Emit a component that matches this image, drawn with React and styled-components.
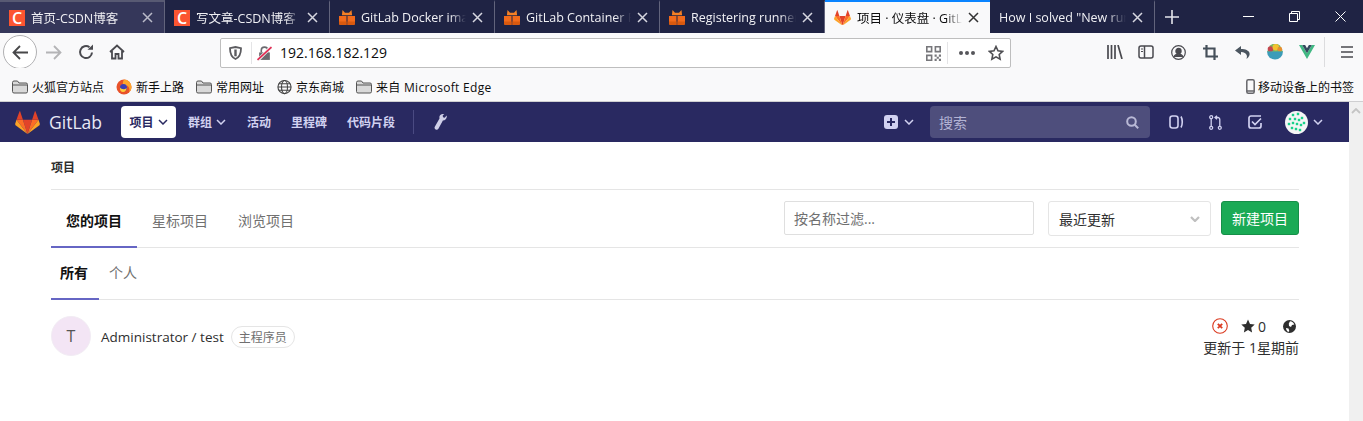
import styled, { createGlobalStyle } from 'styled-components';

const FONT = `"Open Sans", "Noto Sans", "Noto Sans CJK SC", sans-serif`;

const GlobalStyle = createGlobalStyle`
  html, body {
    margin: 0;
    padding: 0;
    background: #fff;
    overflow: hidden;
  }
  * {
    box-sizing: border-box;
  }
`;

const tabs = [
  { id: 1, title: '首页-CSDN博客', icon: 'csdn', hover: true },
  { id: 2, title: '写文章-CSDN博客', icon: 'csdn' },
  { id: 3, title: 'GitLab Docker images', icon: 'box' },
  { id: 4, title: 'GitLab Container Registry', icon: 'box' },
  { id: 5, title: 'Registering runners', icon: 'box' },
  { id: 6, title: '项目 · 仪表盘 · GitLab', icon: 'fox', active: true },
  { id: 7, title: 'How I solved "New runner', icon: null },
];

function Fox({ size = 24 }) {
  return (
    <svg width={size} height={size * 0.92} viewBox="0 0 24 22">
      <polygon points="12,22 16.4,8.4 7.6,8.4" fill="#e24329" />
      <polygon points="12,22 7.6,8.4 1.4,8.4" fill="#fc6d26" />
      <polygon points="1.4,8.4 0.1,12.4 0.5,13.7 12,22" fill="#fca326" />
      <polygon points="1.4,8.4 7.6,8.4 4.9,0.2 4.4,0.2" fill="#e24329" />
      <polygon points="12,22 16.4,8.4 22.6,8.4" fill="#fc6d26" />
      <polygon points="22.6,8.4 23.9,12.4 23.5,13.7 12,22" fill="#fca326" />
      <polygon points="22.6,8.4 16.4,8.4 19.1,0.2 19.6,0.2" fill="#e24329" />
    </svg>
  );
}

function BoxIcon() {
  return (
    <svg width="16" height="15" viewBox="0 0 16 15">
      <path d="M3.500 0L6 2.800h4L12.500 0l.6 5.200H2.900z" fill="#f58025" />
      <path d="M0 6h7.500v9H1l-1-1zM8.500 6H16v8l-1 1H8.500z" fill="#f26a1b" />
      <path d="M0 11.500h7.500V15H1l-1-1zM8.500 11.500H16V14l-1 1H8.500z" fill="#d9590f" />
    </svg>
  );
}

function CloseIcon() {
  return (
    <svg width="11" height="11" viewBox="0 0 11 11" stroke="currentColor" strokeWidth="1.500">
      <path d="M1 1l9 9M10 1l-9 9" />
    </svg>
  );
}

function Tab({ tab }) {
  return (
    <TabItem $active={tab.active} $hover={tab.hover}>
      {tab.icon === 'csdn' && <CsdnMark>C</CsdnMark>}
      {tab.icon === 'box' && <BoxIcon />}
      {tab.icon === 'fox' && <Fox size={17} />}
      <TabTitle>{tab.title}</TabTitle>
      <TabClose $active={tab.active} $hover={tab.hover}>
        <CloseIcon />
      </TabClose>
    </TabItem>
  );
}

function FolderIcon() {
  return (
    <svg width="16" height="14" viewBox="0 0 16 14">
      <path d="M.5 2.500A1.500 1.500 0 0 1 2 1h3.500l1.500 2h7a1.500 1.500 0 0 1 1.500 1.500v7A1.500 1.500 0 0 1 14 13H2a1.500 1.500 0 0 1-1.500-1.500z" fill="#d9d9d9" stroke="#555" />
      <path d="M1 5h14" stroke="#555" />
    </svg>
  );
}

function FirefoxIcon() {
  return (
    <svg width="16" height="16" viewBox="0 0 16 16">
      <circle cx="8" cy="8" r="7.500" fill="#e8522a" />
      <path d="M8 .5A7.500 7.500 0 0 1 15.500 8c0 2-1 4-2.500 5.300 1-2.300.3-5.300-2-6.800.4 1.300-.2 2.300-1 2.800-.5-1.300-2-1.800-3-3.300C6.600 4.500 7 2 8 .5z" fill="#ffa62b" />
      <circle cx="7.500" cy="8.500" r="3.500" fill="#3d3fb4" />
      <path d="M4 8.500c1 1.500 3 2 5 1.500 1-.3 1.500-1 1.600-1.500C10.800 11 9 13 7 13c-2 0-3.500-2-3-4.500z" fill="#ffcb3b" />
    </svg>
  );
}

function GlobeIcon() {
  return (
    <svg width="15" height="16" viewBox="0 0 16 16" fill="none" stroke="#444" strokeWidth="1.200">
      <circle cx="8" cy="8" r="7" />
      <ellipse cx="8" cy="8" rx="3.200" ry="7" />
      <path d="M1 8h14M2 4.500h12M2 11.500h12" />
    </svg>
  );
}

function Chevron({ color = 'currentColor', width = 1.5 }) {
  return (
    <svg width="10" height="6" viewBox="0 0 10 6" fill="none" stroke={color} strokeWidth={width}>
      <path d="M1 1l4 4 4-4" />
    </svg>
  );
}

function Identicon() {
  const dots = [
    [8, 4], [13, 3], [17, 7], [5, 8], [10, 8], [14, 9], [19, 12],
    [4, 13], [8, 12], [12, 13], [16, 14], [7, 17], [11, 18], [15, 19],
  ];
  return (
    <svg width="23" height="23" viewBox="0 0 23 23">
      <circle cx="11.500" cy="11.500" r="11.500" fill="#f6f6f6" />
      {dots.map(([x, y]) => (
        <rect key={`${x}-${y}`} x={x - 1.200} y={y - 1.200} width="2.400" height="2.400" fill="#19d18b" />
      ))}
    </svg>
  );
}

export default function App() {
  return (
    <Page>
      <GlobalStyle />
      <TabStrip>
        {tabs.map((tab) => (
          <Tab key={tab.id} tab={tab} />
        ))}
        <NewTab>
          <svg width="14" height="14" viewBox="0 0 14 14" stroke="#e4e5ec" strokeWidth="1.600">
            <path d="M7 0v14M0 7h14" />
          </svg>
        </NewTab>
        <WindowControls>
          <WindowButton>
            <svg width="11" height="11" viewBox="0 0 11 11" stroke="#fff"><path d="M0 5.500h11" /></svg>
          </WindowButton>
          <WindowButton>
            <svg width="11" height="11" viewBox="0 0 11 11" stroke="#fff" fill="none">
              <path d="M.5 2.500h8v8h-8zM2.500 2.500v-2h8v8h-2" />
            </svg>
          </WindowButton>
          <WindowButton>
            <svg width="11" height="11" viewBox="0 0 11 11" stroke="#fff"><path d="M.5.5l10 10M10.500.5l-10 10" /></svg>
          </WindowButton>
        </WindowControls>
      </TabStrip>

      <Toolbar>
        <BackButton>
          <svg width="17" height="15" viewBox="0 0 17 15" fill="none" stroke="#474749" strokeWidth="1.800">
            <path d="M16 7.500H2M8 1L1.500 7.500 8 14" />
          </svg>
        </BackButton>
        <ToolButton $w={32}>
          <svg width="17" height="15" viewBox="0 0 17 15" fill="none" stroke="#b4b4b6" strokeWidth="1.800">
            <path d="M1 7.500h14M9 1l6.500 6.500L9 14" />
          </svg>
        </ToolButton>
        <ToolButton $w={33}>
          <svg width="16" height="16" viewBox="0 0 16 16" fill="none" stroke="#4a4a4f" strokeWidth="2">
            <path d="M14 8.500A6 6 0 1 1 11.500 3.200" />
            <path d="M9.500 5.800h5.500V.5z" fill="#4a4a4f" stroke="none" />
          </svg>
        </ToolButton>
        <ToolButton $w={30}>
          <svg width="16" height="16" viewBox="0 0 16 16" fill="none" stroke="#4a4a4f" strokeWidth="1.800">
            <path d="M1 8l7-6.500L15 8M3 7v7.500h3.500V10h3v4.500H13V7" />
          </svg>
        </ToolButton>
        <UrlBar>
          <UrlShield>
            <svg width="13" height="14" viewBox="0 0 13 14" fill="none" stroke="#5b5b5f" strokeWidth="1.800">
              <path d="M1 2.200L6.500 1 12 2.200c0 5-1 8.800-5.500 10.800C2 11 1 7.200 1 2.200z" />
              <path d="M6.500 3.500v6.800" strokeWidth="2.400" />
            </svg>
          </UrlShield>
          <svg width="15" height="15" viewBox="0 0 14 14">
            <path d="M2 6h10v7H2z" fill="#6a6a6f" />
            <path d="M4 6V4a3 3 0 0 1 6 0v2" fill="none" stroke="#6a6a6f" strokeWidth="1.500" />
            <path d="M0.500 13.500L13.500 .5" stroke="#f4f4f4" strokeWidth="3" />
            <path d="M0.500 13L13.500 1" stroke="#e22850" strokeWidth="1.500" />
          </svg>
          <UrlText>192.168.182.129</UrlText>
          <UrlActions>
            <svg width="15" height="15" viewBox="0 0 14 14" fill="#77777b">
              <path d="M0 0h6v6H0zM1.500 1.500v3h3v-3zM8 0h6v6H8zM9.500 1.500v3h3v-3zM0 8h6v6H0zM1.500 9.500v3h3v-3z" fillRule="evenodd" />
              <path d="M8 8h2v2H8zM12 8h2v2h-2zM10 10h2v2h-2zM8 12h2v2H8zM12 12h2v2h-2z" />
            </svg>
            <UrlDivider />
            <Dots>
              <i /><i /><i />
            </Dots>
            <svg width="16" height="16" viewBox="0 0 16 16" fill="none" stroke="#4f4f53" strokeWidth="1.600">
              <path d="M8 1.500l2 4.300 4.600.6-3.400 3.100.9 4.600L8 11.800l-4.100 2.300.9-4.600L1.400 6.400 6 5.800z" />
            </svg>
          </UrlActions>
        </UrlBar>
        <ToolIcons>
          <ToolIcon $w={30}>
            <svg width="16" height="14" viewBox="0 0 16 14" stroke="#4a4a4f" strokeWidth="1.700">
              <path d="M1 0v14M4.500 0v14M8 0v14M11 0l4 14" />
            </svg>
          </ToolIcon>
          <ToolIcon>
            <svg width="16" height="14" viewBox="0 0 16 14" fill="none" stroke="#4a4a4f" strokeWidth="1.500">
              <rect x="1" y="1" width="14" height="12" rx="2" />
              <path d="M6.500 1v12" />
              <path d="M3 4h2M3 6.500h2" strokeWidth="1" />
            </svg>
          </ToolIcon>
          <ToolIcon>
            <svg width="15" height="15" viewBox="0 0 15 15" fill="none" stroke="#4a4a4f" strokeWidth="1.200">
              <circle cx="7.500" cy="7.500" r="6.800" />
              <circle cx="7.500" cy="6" r="2.600" fill="#4a4a4f" />
              <path d="M3 12c.8-2 2.500-2.800 4.500-2.800S11.200 10 12 12" fill="#4a4a4f" />
            </svg>
          </ToolIcon>
          <ToolIcon>
            <svg width="15" height="15" viewBox="0 0 15 15" fill="none" stroke="#46505a" strokeWidth="2.200">
              <path d="M3.500 0v11.500H15M0 3.500h11.500V15" />
            </svg>
          </ToolIcon>
          <ToolIcon $w={33}>
            <svg width="15" height="13" viewBox="0 0 15 13" fill="none">
              <path d="M6 0L0 4.500 6 9V6c3 0 5 1 6 4-.1 1-.3 2-.5 3 2.500-2 3.500-4 3-6-.7-2.500-4-4-8.500-4z" fill="#4c5660" />
            </svg>
          </ToolIcon>
          <ToolIcon>
            <svg width="16" height="16" viewBox="0 0 16 16">
              <path d="M3 1.500A8 8 0 0 1 13 1.500L16 8H0z" fill="#7bb661" />
              <circle cx="3.500" cy="5" r="2.800" fill="#c4464e" />
              <circle cx="8.800" cy="3.200" r="3.200" fill="#f2c230" />
              <circle cx="12.800" cy="5.200" r="2.400" fill="#e58f2f" />
              <path d="M0 7.500h16a8 8 0 0 1-16 0z" fill="#3c9cb8" />
            </svg>
          </ToolIcon>
          <ToolIcon>
            <svg width="16" height="14" viewBox="0 0 16 14">
              <path d="M0 0h3.200L8 8.300 12.800 0H16L8 14z" fill="#41b883" />
              <path d="M3.200 0h2.900L8 3.300 9.900 0h2.900L8 8.300z" fill="#35495e" />
            </svg>
          </ToolIcon>
          <ToolDivider />
          <ToolIcon>
            <svg width="14" height="12" viewBox="0 0 14 12" stroke="#4a4a4f" strokeWidth="1.700">
              <path d="M1 1h12M1 6h12M1 11h12" />
            </svg>
          </ToolIcon>
        </ToolIcons>
      </Toolbar>

      <Bookmarks>
        <Bookmark $w={104}><FolderIcon />火狐官方站点</Bookmark>
        <Bookmark $w={80}><FirefoxIcon />新手上路</Bookmark>
        <Bookmark $w={81}><FolderIcon />常用网址</Bookmark>
        <Bookmark $w={79}><GlobeIcon />京东商城</Bookmark>
        <Bookmark $w={140} $wide><FolderIcon />来自 Microsoft Edge</Bookmark>
        <MobileBookmark>
          <svg width="9" height="15" viewBox="0 0 9 15" fill="none" stroke="#66666a" strokeWidth="1.500">
            <rect x=".8" y=".8" width="7.400" height="13.400" rx="1.500" />
            <path d="M1 12h7" />
          </svg>
          移动设备上的书签
        </MobileBookmark>
      </Bookmarks>

      <Viewport>
        <Content>
          <NavBar>
            <Brand>
              <Fox size={25} />
              <BrandName>GitLab</BrandName>
            </Brand>
            <NavActive>
              项目 <Chevron />
            </NavActive>
            <NavLink $w={59} $lead={12}>
              群组 <Chevron />
            </NavLink>
            <NavLink $w={44}>活动</NavLink>
            <NavLink $w={56}>里程碑</NavLink>
            <NavLink $w={66}>代码片段</NavLink>
            <NavDivider />
            <WrenchButton>
              <svg width="13" height="16" viewBox="0 0 13 16" fill="#cfcfe8">
                <path d="M8.500 0c-2.300.2-3.600 2.200-3 4.500L.8 12.700c-.6 1.100-.1 2.300.9 2.800 1 .5 2.100.2 2.700-.8l4.500-8.200c2.300 0 3.900-1.700 3.900-4l-.2-.9L10.700 3.800 9 3.200 8.700 1.500 10.300.2z" />
              </svg>
            </WrenchButton>
            <NavRight>
              <CreateButton>
                <svg width="14" height="14" viewBox="0 0 14 14">
                  <rect width="14" height="14" rx="3" fill="#d1d1f0" />
                  <path d="M7 3v8M3 7h8" stroke="#292961" strokeWidth="2" />
                </svg>
                <Chevron color="#d1d1f0" />
              </CreateButton>
              <SearchBox>
                <SearchLabel>搜索</SearchLabel>
                <svg width="13" height="13" viewBox="0 0 13 13" fill="none" stroke="#b9b9d6" strokeWidth="2">
                  <circle cx="5.500" cy="5.500" r="4.300" />
                  <path d="M8.700 8.700l3.500 3.500" />
                </svg>
              </SearchBox>
              <NavIcon>
                <svg width="15" height="14" viewBox="0 0 15 14" fill="none" stroke="#d1d1f0" strokeWidth="1.600">
                  <rect x="1" y="1" width="8" height="12" rx="2.500" />
                  <path d="M12 1.500c1.700 3 1.700 8 0 11" />
                </svg>
              </NavIcon>
              <NavIcon>
                <svg width="13" height="15" viewBox="0 0 13 15" fill="none" stroke="#d1d1f0" strokeWidth="1.300">
                  <circle cx="2.200" cy="2.200" r="1.500" />
                  <circle cx="2.200" cy="12.800" r="1.500" />
                  <circle cx="10.800" cy="12.800" r="1.500" />
                  <path d="M2.200 3.700v7.600M10.800 11.300V4.500c0-1-.7-2-2-2H6.500M8 .8L6 2.500l2 1.700" />
                </svg>
              </NavIcon>
              <NavIcon>
                <svg width="14" height="14" viewBox="0 0 14 14" fill="none" stroke="#d1d1f0" strokeWidth="1.700">
                  <path d="M13 1H3a2 2 0 0 0-2 2v8a2 2 0 0 0 2 2h8a2 2 0 0 0 2-2V8" />
                  <path d="M4 6.500l3 3 6-6" />
                </svg>
              </NavIcon>
              <UserMenu>
                <Identicon />
                <Chevron color="#d1d1f0" />
              </UserMenu>
            </NavRight>
          </NavBar>

          <Main>
            <Breadcrumb>项目</Breadcrumb>
            <TopTabs>
              <TopTab $active>您的项目</TopTab>
              <TopTab>星标项目</TopTab>
              <TopTab>浏览项目</TopTab>
              <Controls>
                <FilterInput>按名称过滤...</FilterInput>
                <SortSelect>
                  最近更新
                  <Chevron color="#bfbfbf" width={2.200} />
                </SortSelect>
                <NewProject>新建项目</NewProject>
              </Controls>
            </TopTabs>
            <SubTabs>
              <SubTab $active>所有</SubTab>
              <SubTab>个人</SubTab>
            </SubTabs>
            <ProjectRow>
              <Avatar>T</Avatar>
              <ProjectName>Administrator / test</ProjectName>
              <RoleBadge>主程序员</RoleBadge>
              <ProjectMeta>
                <MetaIcons>
                  <svg width="16" height="16" viewBox="0 0 16 16" fill="none" stroke="#db3b21" strokeWidth="1.100">
                    <circle cx="8" cy="8" r="7.300" />
                    <path d="M5.800 5.800l4.400 4.400M10.200 5.800l-4.400 4.400" strokeWidth="1.800" />
                  </svg>
                  <StarCount>
                    <svg width="14" height="14" viewBox="0 0 14 14" fill="#2e2e2e">
                      <path d="M7 .5l2 4.400 4.700.6-3.500 3.200.9 4.800L7 11.100l-4.100 2.400.9-4.800L.3 5.500 5 4.900z" />
                    </svg>
                    0
                  </StarCount>
                  <svg width="13" height="13" viewBox="0 0 13 13">
                    <circle cx="6.500" cy="6.500" r="6.500" fill="#2e2e2e" />
                    <path d="M7 1.200c2 .2 3.700 1.500 4.300 3.300L9 5 8 7 6 6 5.800 3.500zM3 8l2.500.5.800 2.500-1 1C3.800 11 3 9.500 3 8z" fill="#fff" />
                  </svg>
                </MetaIcons>
                <Updated>更新于 1星期前</Updated>
              </ProjectMeta>
            </ProjectRow>
          </Main>
        </Content>
        <ScrollTrack>
          <svg width="10" height="6" viewBox="0 0 10 6" fill="none" stroke="#c4c4c4" strokeWidth="1.800">
            <path d="M1 5l4-4 4 4" />
          </svg>
        </ScrollTrack>
      </Viewport>
    </Page>
  );
}

const Page = styled.div`
  width: 1363px;
  height: 421px;
  overflow: hidden;
  display: flex;
  flex-direction: column;
  font-family: ${FONT};
`;

const TabStrip = styled.div`
  display: flex;
  height: 33px;
  background: #1f2344;
`;

const TabItem = styled.div`
  width: 165px;
  display: flex;
  align-items: center;
  gap: 6px;
  padding: 0 11px 0 9px;
  font-size: 12.500px;
  background: ${(p) => (p.$active ? '#f9f9fa' : p.$hover ? '#35375a' : 'transparent')};
  border-right: ${(p) => (p.$active ? 'none' : '1px solid #62647c')};
  border-top: 2px solid ${(p) => (p.$active ? '#0a84ff' : p.$hover ? '#585a73' : 'transparent')};
  color: ${(p) => (p.$active ? '#0c0c0d' : '#f0f0f4')};
`;

const CsdnMark = styled.span`
  width: 16px;
  height: 16px;
  flex: none;
  background: #fc5531;
  color: #fff;
  font: 600 16px/16px 'Open Sans', sans-serif;
  text-align: center;
`;

const TabTitle = styled.span`
  flex: 1;
  min-width: 0;
  white-space: nowrap;
  overflow: hidden;
  mask-image: linear-gradient(to right, #000 85%, transparent);
`;

const TabClose = styled.span`
  display: flex;
  flex: none;
  color: ${(p) => (p.$active ? '#333' : p.$hover ? '#b9bac8' : '#d6d7e0')};
`;

const NewTab = styled.div`
  width: 34px;
  display: flex;
  align-items: center;
  justify-content: center;
`;

const WindowControls = styled.div`
  margin-left: auto;
  display: flex;
`;

const WindowButton = styled.div`
  width: 46px;
  display: flex;
  align-items: center;
  justify-content: center;
`;

const Toolbar = styled.div`
  height: 35px;
  display: flex;
  align-items: center;
  background: #f9f9fa;
  padding-left: 3px;
`;

const BackButton = styled.div`
  width: 34px;
  height: 34px;
  flex: none;
  border: 1px solid #b1b1b3;
  border-radius: 50%;
  background: #fff;
  display: flex;
  align-items: center;
  justify-content: center;
  margin-top: 3px;
`;

const ToolButton = styled.div`
  width: ${(p) => p.$w}px;
  display: flex;
  flex: none;
  align-items: center;
  justify-content: center;
  margin-top: 3px;
`;

const UrlBar = styled.div`
  width: 791px;
  height: 30px;
  flex: none;
  margin: 5px 0 0 88px;
  display: flex;
  align-items: center;
  background: #fff;
  border: 1px solid #bebebe;
  border-radius: 2px;
  padding-left: 8px;
`;

const UrlShield = styled.span`
  display: flex;
  padding-right: 9px;
  margin-right: 5px;
  border-right: 1px solid #e4e4e6;
  height: 22px;
  align-items: center;
`;

const UrlText = styled.span`
  margin: 0 0 2px 8px;
  font-size: 14px;
  color: #0c0c0d;
`;

const UrlActions = styled.div`
  margin-left: auto;
  display: flex;
  align-items: center;
  padding-right: 6px;
`;

const UrlDivider = styled.span`
  width: 1px;
  height: 22px;
  background: #e4e4e6;
  margin: 0 11px 0 6px;
`;

const Dots = styled.span`
  display: flex;
  gap: 2px;
  margin-right: 13px;
  i {
    width: 4px;
    height: 4px;
    border-radius: 50%;
    background: #55555a;
  }
`;

const ToolIcons = styled.div`
  margin-left: 89px;
  display: flex;
  align-items: center;
  margin-top: 3px;
`;

const ToolIcon = styled.div`
  width: ${(p) => p.$w || 32}px;
  height: 18px;
  display: flex;
  align-items: center;
  justify-content: center;
`;

const ToolDivider = styled.span`
  width: 1px;
  height: 30px;
  background: #dcdcde;
  margin: 0 6px 0 1px;
`;

const Bookmarks = styled.div`
  height: 34px;
  display: flex;
  align-items: center;
  padding: 4px 9px 0 12px;
  background: #f9f9fa;
  border-bottom: 1px solid #cfcfd1;
  font-size: 12px;
  color: #0c0c0d;
`;

const Bookmark = styled.div`
  width: ${(p) => p.$w}px;
  display: flex;
  align-items: center;
  gap: 4px;
  white-space: nowrap;
  letter-spacing: ${(p) => (p.$wide ? '0.3px' : 'normal')};
`;

const MobileBookmark = styled.div`
  margin-left: auto;
  display: flex;
  align-items: center;
  gap: 3px;
`;

const Viewport = styled.div`
  flex: 1;
  display: flex;
  min-height: 0;
`;

const Content = styled.div`
  flex: 1;
  min-width: 0;
  background: #fff;
`;

const ScrollTrack = styled.div`
  width: 14px;
  background: #f0f0f0;
  display: flex;
  justify-content: center;
  padding-top: 6px;
  align-items: flex-start;
`;

const NavBar = styled.nav`
  height: 40px;
  background: #292961;
  display: flex;
  align-items: center;
  padding: 0 26px 0 15px;
  font-size: 12px;
  font-weight: 600;
  color: #d1d1f0;
`;

const Brand = styled.div`
  width: 106px;
  display: flex;
  align-items: center;
  gap: 9px;
`;

const BrandName = styled.span`
  font-size: 17.500px;
  font-weight: 400;
  color: #e8e8f5;
`;

const NavActive = styled.div`
  width: 55px;
  height: 32px;
  border-radius: 4px;
  background: #fff;
  color: #292961;
  display: flex;
  align-items: center;
  justify-content: center;
  gap: 4px;
`;

const NavLink = styled.div`
  width: ${(p) => p.$w}px;
  margin-left: ${(p) => p.$lead || 0}px;
  display: flex;
  align-items: center;
  gap: 4px;
  white-space: nowrap;
`;

const NavDivider = styled.span`
  width: 1px;
  height: 24px;
  background: #4a4a82;
`;

const WrenchButton = styled.div`
  margin-left: 20px;
  display: flex;
`;

const NavRight = styled.div`
  margin-left: auto;
  display: flex;
  align-items: center;
`;

const CreateButton = styled.div`
  display: flex;
  align-items: center;
  gap: 6px;
  margin-right: 16px;
`;

const SearchBox = styled.div`
  width: 220px;
  height: 32px;
  margin-right: 7px;
  background: #4e4e7c;
  border-radius: 4px;
  display: flex;
  align-items: center;
  justify-content: space-between;
  padding: 0 11px 0 9px;
`;

const SearchLabel = styled.span`
  font-size: 14px;
  font-weight: 400;
  color: #b3b3d4;
`;

const NavIcon = styled.div`
  width: 39px;
  display: flex;
  justify-content: center;
`;

const UserMenu = styled.div`
  display: flex;
  align-items: center;
  gap: 5px;
  margin-left: 11px;
`;

const Main = styled.main`
  padding: 0 50px 0 51px;
`;

const Breadcrumb = styled.div`
  height: 48px;
  padding-top: 2px;
  display: flex;
  align-items: center;
  font-size: 12px;
  font-weight: 600;
  color: #2e2e2e;
  border-bottom: 1px solid #e5e5e5;
`;

const TopTabs = styled.div`
  height: 58px;
  display: flex;
  border-bottom: 1px solid #e5e5e5;
`;

const TopTab = styled.div`
  padding: 4px 15px 0;
  margin-bottom: -1px;
  display: flex;
  align-items: center;
  font-size: 14px;
  font-weight: ${(p) => (p.$active ? 700 : 400)};
  color: ${(p) => (p.$active ? '#111' : '#707070')};
  border-bottom: 2px solid ${(p) => (p.$active ? '#6666c4' : 'transparent')};
`;

const Controls = styled.div`
  margin-left: auto;
  display: flex;
  align-items: flex-start;
  padding-top: 11px;
`;

const FilterInput = styled.div`
  width: 250px;
  height: 34px;
  border: 1px solid #dfdfdf;
  border-radius: 2px;
  padding-left: 9px;
  display: flex;
  align-items: center;
  font-size: 14px;
  color: #707070;
`;

const SortSelect = styled.div`
  width: 163px;
  height: 35px;
  margin-left: 14px;
  border: 1px solid #e5e5e5;
  border-radius: 3px;
  padding: 0 10px;
  display: flex;
  align-items: center;
  justify-content: space-between;
  font-size: 14px;
  color: #2e2e2e;
`;

const NewProject = styled.div`
  width: 78px;
  height: 34px;
  margin-left: 10px;
  background: #1aaa55;
  border: 1px solid #168f48;
  border-radius: 3px;
  color: #fff;
  font-size: 14px;
  display: flex;
  align-items: center;
  justify-content: center;
`;

const SubTabs = styled.div`
  height: 52px;
  display: flex;
  border-bottom: 1px solid #e5e5e5;
`;

const SubTab = styled.div`
  min-width: ${(p) => (p.$active ? 48 : 0)}px;
  padding: 0 ${(p) => (p.$active ? '2px' : '0')} 2px ${(p) => (p.$active ? '0' : '10px')};
  margin-bottom: -1px;
  display: flex;
  align-items: center;
  justify-content: ${(p) => (p.$active ? 'center' : 'flex-start')};
  font-size: 14px;
  font-weight: ${(p) => (p.$active ? 700 : 400)};
  color: ${(p) => (p.$active ? '#111' : '#707070')};
  border-bottom: 2px solid ${(p) => (p.$active ? '#6666c4' : 'transparent')};
`;

const ProjectRow = styled.div`
  height: 56px;
  display: flex;
  align-items: flex-start;
  padding-top: 16px;
`;

const Avatar = styled.div`
  width: 40px;
  height: 40px;
  border-radius: 50%;
  background: #f3e5f5;
  border: 1px solid #f2ecf4;
  color: #555;
  font-size: 16px;
  display: flex;
  align-items: center;
  justify-content: center;
  margin-right: 10px;
`;

const ProjectName = styled.div`
  font-size: 13.500px;
  font-weight: 500;
  line-height: 18px;
  color: #2e2e2e;
  margin-top: 12px;
`;

const RoleBadge = styled.div`
  height: 22px;
  margin: 10px 0 0 7px;
  padding: 0 7px;
  border: 1px solid #e5e5e5;
  border-radius: 11px;
  font-size: 12px;
  color: #707070;
  display: flex;
  align-items: center;
`;

const ProjectMeta = styled.div`
  margin-left: auto;
  margin-top: 2px;
  display: flex;
  flex-direction: column;
  align-items: flex-end;
  gap: 4px;
`;

const MetaIcons = styled.div`
  display: flex;
  align-items: center;
  gap: 12px;
  height: 16px;
  color: #2e2e2e;
  font-size: 14px;
  padding-right: 3px;
`;

const StarCount = styled.span`
  display: flex;
  align-items: center;
  gap: 3px;
  margin: 0 5px 0 1px;
`;

const Updated = styled.div`
  font-size: 14px;
  line-height: 19px;
  color: #2e2e2e;
`;
